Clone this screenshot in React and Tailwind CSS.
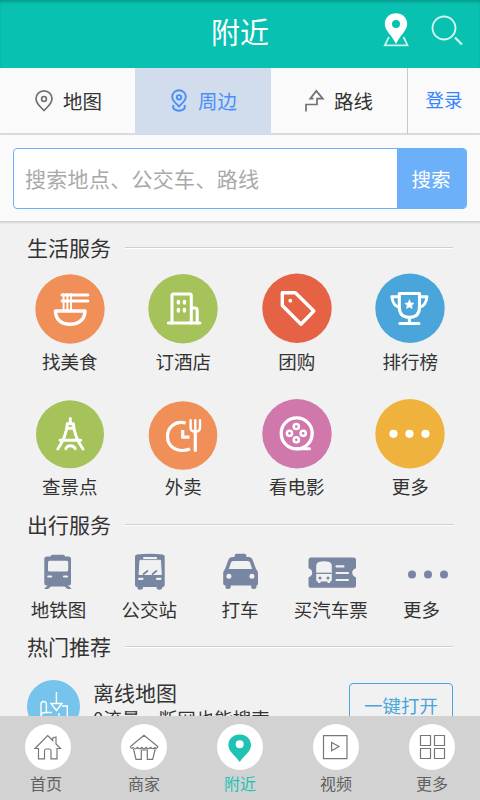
import React, { useState } from 'react';

const services = [
    {
        label: '找美食',
        circle: '#f08f57',
        cy: 35,
        icon: (
            <>
                <path d="M27 21H53M27 27H53" strokeWidth="2.8" />
                <path d="M28.6 20V36M32.4 20V36M36 20V36" strokeWidth="1.9" />
                <path d="M20.5 37H50C50 45 44 50.3 35 50.3S20.5 45 20.5 37Z" strokeWidth="3.5" />
            </>
        ),
    },
    {
        label: '订酒店',
        circle: '#a5c25b',
        cy: 34.7,
        icon: (
            <>
                <path d="M24 49V21.5Q24 20 25.5 20H42Q43.3 20 43.3 21.5V49M43.5 34H47Q49.2 34 49.2 36V49" strokeWidth="3" />
                <path d="M20.3 49H52" strokeWidth="3" />
                <path d="M30.4 27.6V29M36.4 27.6V29M30.4 35.6V37M36.4 35.6V37" strokeWidth="3.5" />
            </>
        ),
    },
    {
        label: '团购',
        circle: '#e56344',
        cy: 34.3,
        icon: (
            <>
                <path d="M20.3 18.8H33.3L51.8 37L39 50.2L20.3 31.5Z" strokeWidth="3.4" />
                <circle cx="28.3" cy="26.7" r="1.9" fill="white" stroke="none" />
            </>
        ),
    },
    {
        label: '排行榜',
        circle: '#49a5da',
        cy: 34.3,
        icon: (
            <>
                <path d="M24.3 19.5H44.5V33C44.5 40 40.5 43.3 34.4 43.3S24.3 40 24.3 33Z" strokeWidth="3.1" />
                <path d="M24 22.7H16.8C17.4 28.5 19.5 32.5 24.6 33.5M44.8 22.7H52C51.4 28.5 49.3 32.5 44.2 33.5" strokeWidth="2.9" />
                <path d="M34.4 44V49M24.8 49.6H44" strokeWidth="3" />
                <path d="M34.4 25.8L35.8 28.8L39 29.2L36.7 31.4L37.3 34.6L34.4 33.1L31.5 34.6L32.1 31.4L29.8 29.2L33 28.8Z" fill="white" strokeWidth="0.5" />
            </>
        ),
    },
    {
        label: '查景点',
        circle: '#a5c25b',
        cy: 35.3,
        r: 34,
        icon: (
            <>
                <path d="M35.3 19.5V24" strokeWidth="3" />
                <path d="M32.3 24.8H38.4C39 32 41.5 41 48 50M32.3 24.8C31.7 32 29 41 22.8 50M31.8 29.3H38.8M25 41.3H45.7" strokeWidth="2.9" />
                <path d="M30.8 49.7C32.5 45.8 38.3 45.8 40.2 49.7" strokeWidth="2.9" />
            </>
        ),
    },
    {
        label: '外卖',
        circle: '#f08f57',
        cy: 36.5,
        r: 34.3,
        icon: (
            <>
                <path d="M37.7 24C26.5 21.5 19.5 28.5 19.5 37.500C19.5 48 29.5 54.5 42 50" strokeWidth="3.2" strokeLinecap="butt" />
                <path d="M34.7 31V38.2H41.5" strokeWidth="3.2" strokeLinecap="butt" />
                <path d="M42.6 21.2V28.5Q42.6 32.7 47.3 32.7T52 28.5V21.2M47.3 21.2V32" strokeWidth="2.4" />
                <path d="M47.3 32V51.5" strokeWidth="3.2" />
            </>
        ),
    },
    {
        label: '看电影',
        circle: '#d077ac',
        cy: 34.7,
        icon: (
            <>
                <circle cx="34.7" cy="34.4" r="15.5" strokeWidth="3.3" />
                <path d="M34 49.7H47.5" strokeWidth="3" />
                <circle cx="34.3" cy="27.5" r="2.6" strokeWidth="2.5" />
                <circle cx="27.5" cy="34.3" r="2.6" strokeWidth="2.5" />
                <circle cx="41.2" cy="34.3" r="2.6" strokeWidth="2.5" />
                <circle cx="34.3" cy="40.8" r="2.6" strokeWidth="2.5" />
            </>
        ),
    },
    {
        label: '更多',
        circle: '#efb33d',
        cy: 34.7,
        icon: (
            <g fill="white" stroke="none">
                <circle cx="18.4" cy="34.8" r="4.1" />
                <circle cx="34.4" cy="34.8" r="4.1" />
                <circle cx="50.4" cy="34.8" r="4.1" />
            </g>
        ),
    },
];

const transport = [
    {
        label: '地铁图',
        icon: (
            <>
                <path d="M16.5 4.5Q16.5 2.8 18.5 2.8H29Q31 2.8 31 4.5H34.5Q37 4.5 37 7V31.5Q37 33.5 35 33.5H12.5Q10.3 33.5 10.3 31.5V7Q10.3 4.5 13 4.5Z" />
                <path d="M14 33L10 37H14L17 34.5H30.5L33.5 37H37.8L33.5 33Z" />
                <rect x="14" y="8.7" width="20.2" height="10.7" rx="1.5" fill="#f1f1f1" />
                <path d="M14.3 24.5H17.2M30 24.5H33" stroke="#f1f1f1" strokeWidth="2.2" strokeLinecap="round" />
            </>
        ),
    },
    {
        label: '公交站',
        icon: (
            <>
                <path d="M10 4.5Q10 3 12 2.6Q24.8 0.8 37.6 2.6Q39.7 3 39.7 4.5V33Q39.7 35 37.7 35H37.2V35.5Q37.2 37.7 34.4 37.7T31.6 35.5V35H18V35.5Q18 37.7 15.2 37.7T12.4 35.5V35H12Q10 35 10 33Z" />
                <path d="M15 8.3H35.5L36.3 22.5H14Z" fill="#f1f1f1" stroke="#f1f1f1" strokeLinejoin="round" />
                <path d="M19 5.9H31.2" stroke="#f1f1f1" strokeWidth="2" strokeLinecap="round" />
                <path d="M18 22.5L23 18.5M27 22.5L32 18.5" stroke="#7986a1" strokeWidth="1.7" />
                <path d="M14 26.8H17.5M32 26.8H35.5" stroke="#f1f1f1" strokeWidth="2.2" strokeLinecap="round" />
            </>
        ),
    },
    {
        label: '打车',
        icon: (
            <>
                <path d="M18.5 5Q18.5 1.7 20.5 1.7H28.5Q30.5 1.7 30.5 5H33Q35.5 5 36.5 7.5L40 17Q42 19 42 21V31.5Q42 33.5 40.5 33.5V35Q40.5 37 37.8 37T35.2 35V33.5H14.8V35Q14.8 37 12.1 37T9.5 35V33.5Q7.2 33.5 7.2 31.5V21Q7.2 19 9 17L12.5 7.5Q13.5 5 16 5Z" />
                <path d="M17 9H32Q33.5 9 34 10.5L36.2 17H12.8L15 10.5Q15.5 9 17 9Z" fill="#f1f1f1" />
                <circle cx="12.9" cy="24.2" r="2.5" fill="#f1f1f1" />
                <circle cx="35.9" cy="24.2" r="2.5" fill="#f1f1f1" />
            </>
        ),
    },
    {
        label: '买汽车票',
        icon: (
            <>
                <path d="M3.5 5.5H46.5Q49 5.5 49 8V16.2Q45.2 17.5 45.2 20.8T49 25.4V33.2Q49 35.7 46.5 35.7H3.5Q1.5 35.7 1.5 33.2V25.4Q5.2 24 5.2 20.8T1.5 16.2V8Q1.5 5.5 3.5 5.5Z" />
                <path d="M11.5 10Q17 8.6 22.5 10Q24.8 11 24.8 13.5V28Q24.8 29.5 23 29.5V31H20.5V29.5H13.5V31H11V29.5Q9.2 29.5 9.2 28V13.5Q9.2 11 11.5 10Z" fill="#f1f1f1" />
                <path d="M9.2 21.3H24.8" stroke="#7986a1" strokeWidth="1.3" />
                <circle cx="13" cy="26" r="1.5" />
                <circle cx="21" cy="26" r="1.5" />
                <path d="M29.5 14.4H36.5M29.5 21H41M29.5 28H41" stroke="#f1f1f1" strokeWidth="2.1" strokeLinecap="round" />
            </>
        ),
    },
    {
        label: '更多',
        icon: (
            <>
                <circle cx="14" cy="22.5" r="4" />
                <circle cx="30" cy="22.5" r="4" />
                <circle cx="46" cy="22.5" r="4" />
            </>
        ),
    },
];

const navItems = [
    {
        label: '首页',
        icon: <path d="M13.5 24.5H10L22.7 11.5L27.7 16.5V14L31 13V20L35.5 24.5H32V34.8H26V27Q26 25 24.5 25H21Q19.5 25 19.5 27V34.8H13.5Z" />,
    },
    {
        label: '商家',
        icon: (
            <path d="M23 11.2L9.5 22.5Q10 25.5 12.3 23.5Q14.2 26 16.5 23.5Q18.6 26 20.8 23.5Q23 26 25.2 23.5Q27.4 26 29.6 23.5Q31.8 26 34 23.5Q36.3 25.5 36.8 22.5ZM12.5 25L15 35.3H20.3V26H26.3V35.3H31.7L34.2 25" />
        ),
    },
    {
        label: '附近',
        icon: (
            <path fillRule="evenodd" stroke="none" fill="#1fc3b3" d="M22.700 10.500C16.200 10.500 11.400 15 11.400 21C11.400 27.500 17.700 31 22.700 38C27.700 31 34 27.500 34 21C34 15 29.200 10.500 22.700 10.500ZM22.700 16.200A4 4 0 1 1 22.700 24.200A4 4 0 1 1 22.700 16.200Z" />
        ),
    },
    {
        label: '视频',
        icon: <path d="M10.500 11.700H34V34.700H10.500ZM18.600 18.500V26.700L26 22.600Z" />,
    },
    {
        label: '更多',
        icon: <path d="M11.5 11.5H21.5V21.5H11.5ZM25.500 11.5H35.5V21.5H25.5ZM11.5 24.5H21.5V34.5H11.5ZM25.5 24.5H35.5V34.5H25.5Z" />,
    },
];

function SectionTitle({ title }) {
    return (
        <div className="ml-[27px] mr-[27px] flex h-7 items-center">
            <h2 className="w-[98px] whitespace-nowrap pb-[4px] text-[21px] leading-6 text-[#333]">{title}</h2>
            <div className="-mt-[2px] h-[2px] flex-1 border-t border-[#cfcfcf] bg-white" />
        </div>
    );
}

function Header() {
    return (
        <header className="grid h-[68px] shrink-0 grid-cols-3 bg-[#08c1b0] shadow-[inset_0_3px_3px_-1px_rgba(0,0,0,0.2)]">
            <h1 className="col-start-2 text-center text-[29px] leading-[62px] text-white">附近</h1>
            <div className="flex justify-end gap-[22px] pr-[17px] pt-[12px]">
                <svg className="h-[36px] w-[26px]" viewBox="0 0 26 36" fill="none">
                    <path d="M6 25L1.8 33.3H24.5L20.500 25" stroke="#c9f2ed" strokeWidth="1.8" />
                    <path fillRule="evenodd" fill="white" d="M13 1.3C6.5 1.3 1.8 6 1.8 12C1.8 18.500 8.5 22.5 13 32C17.5 22.5 24.2 18.5 24.2 12C24.2 6 19.5 1.3 13 1.3ZM13 8A4 4 0 1 1 13 16A4 4 0 1 1 13 8Z" />
                </svg>
                <svg className="h-[36px] w-[32px]" viewBox="0 0 32 36" fill="none" stroke="#d5f5f1">
                    <circle cx="13" cy="16" r="11.5" strokeWidth="1.8" />
                    <path d="M24 25.5L31 32.5" strokeWidth="2.2" />
                </svg>
            </div>
        </header>
    );
}

function Tabs({ tab, setTab }) {
    const tabClass = (name) =>
        tab === name ? 'bg-[#d1dced] text-[#4a8ff7] border-[#d1dced]' : 'bg-[#fafafa] text-[#333] border-[#dcdcdc]';

    return (
        <div className="flex h-[67px] shrink-0 text-[19.5px]">
            <button onClick={() => setTab('map')} className={`flex w-[135px] items-center border-b-2 pl-[34px] ${tabClass('map')}`}>
                <svg className="mr-[9px] h-[24px] w-[20px]" viewBox="0 0 20 24" fill="none" stroke={tab === 'map' ? '#4a8ff7' : '#707070'} strokeWidth="1.7">
                    <path d="M10 21.500C6 17.5 2 14.5 2 9.7A8 7.8 0 0 1 18 9.7C18 14.5 14 17.5 10 21.5Z" />
                    <circle cx="10" cy="9.9" r="2.4" />
                </svg>
                地图
            </button>
            <button onClick={() => setTab('nearby')} className={`flex w-[136px] items-center border-b-2 pl-[34px] ${tabClass('nearby')}`}>
                <svg className="mr-[9px] h-[24px] w-[20px]" viewBox="0 0 20 24" fill="none" stroke={tab === 'nearby' ? '#4a8ff7' : '#707070'} strokeWidth="1.9">
                    <path d="M10 17.5C7 14 3.2 12 3.2 7.7A6.8 6.5 0 0 1 16.8 7.7C16.8 12 13 14 10 17.5Z" />
                    <circle cx="10" cy="8.3" r="2.2" />
                    <path d="M4.5 16C3 20 6.500 21.7 10 21.7S17 20 15.5 16" />
                </svg>
                周边
            </button>
            <button onClick={() => setTab('route')} className={`flex w-[136px] items-center border-b-2 pl-[33px] ${tabClass('route')}`}>
                <svg className="mr-[9px] h-[24px] w-[21px]" viewBox="0 0 21 24" fill="none" stroke={tab === 'route' ? '#4a8ff7' : '#707070'} strokeWidth="1.7">
                    <path d="M2 22.5V15.5H13V9.7H18.8L12.3 1.9L6.2 9.7H9.5" />
                </svg>
                路线
            </button>
            <button className="flex-1 border-b-2 border-l border-b-[#dcdcdc] border-l-[#c8c8c8] bg-[#fafafa] pb-[2px] text-[18.5px] text-[#3385ff]">
                登录
            </button>
        </div>
    );
}

function SearchBar() {
    return (
        <div className="h-[87px] shrink-0 border-b border-[#cfcfcf] bg-[#fafafa] px-[13px] pt-[13px] shadow-[0_1px_2px_rgba(0,0,0,0.12)]">
            <div className="flex h-[61px] overflow-hidden rounded border border-[#6bb0f8] bg-white">
                <input
                    className="min-w-0 flex-1 pl-[11px] text-[21px] tracking-[0.3px] outline-none placeholder:text-[#a9a9a9]"
                    placeholder="搜索地点、公交车、路线"
                />
                <button className="w-[69px] bg-[#6bb0f8] pr-[1px] text-[19.5px] text-white">搜索</button>
            </div>
        </div>
    );
}

function App() {
    const [tab, setTab] = useState('nearby');

    return (
        <div className="mx-auto flex h-[800px] w-[480px] flex-col overflow-hidden bg-[#f1f1f1] font-['Noto_Sans_CJK_SC',sans-serif] text-[#333]">
            <Header />
            <Tabs tab={tab} setTab={setTab} />
            <SearchBar />

            <main className="min-h-0 flex-1 overflow-hidden pt-[13px]">
                <SectionTitle title="生活服务" />
                <div className="mx-auto mt-[11px] grid h-[238px] w-[454px] auto-rows-[125px] grid-cols-4">
                    {services.map((service, index) => (
                        <a key={index} className="flex flex-col items-center">
                            <svg className="size-[70px] overflow-visible" viewBox="0 0 70 70" fill="none" stroke="white" strokeLinecap="round" strokeLinejoin="round">
                                <circle cx="35" cy={service.cy} r={service.r || 34.7} fill={service.circle} stroke="none" />
                                {service.icon}
                            </svg>
                            <span className="mt-[5px] text-[18.5px] leading-6">{service.label}</span>
                        </a>
                    ))}
                </div>

                <SectionTitle title="出行服务" />
                <div className="mx-auto mt-[12px] grid h-[82px] w-[454px] grid-cols-5">
                    {transport.map((item, index) => (
                        <a key={index} className="flex flex-col items-center">
                            <svg className="h-[40px] w-[48px] overflow-visible" viewBox="0 0 48 40" fill="#7986a1">
                                {item.icon}
                            </svg>
                            <span className="mt-[5px] whitespace-nowrap text-[18.5px] leading-6">{item.label}</span>
                        </a>
                    ))}
                </div>

                <SectionTitle title="热门推荐" />
                <div className="flex px-[27px] pt-[18px]">
                    <svg className="size-[53px]" viewBox="0 0 53 53" fill="none" stroke="white" strokeWidth="1.4">
                        <circle cx="26.5" cy="26.5" r="26.5" fill="#76c3ec" stroke="none" />
                        <path d="M29.4 12V23.5H24L29.4 30.5L35 23.5H29.4M14 40V24.5Q14 21.5 16.7 21.5T19.4 24.5V32.5Q14 32 14 36M19.4 32.5H25M35 26H40.3V40M32 33V40" />
                    </svg>
                    <div className="-mt-[1px] ml-[13px] flex-1 whitespace-nowrap">
                        <h3 className="text-[21px] leading-[26px]">离线地图</h3>
                        <p className="text-[18.5px] leading-[26px]">0流量，断网也能搜索</p>
                    </div>
                    <button className="mt-[3px] h-[46px] w-[104px] rounded border-[1.5px] border-[#49a5da] text-[18.5px] text-[#49a5da]">一键打开</button>
                </div>
            </main>

            <nav className="grid h-[84px] shrink-0 grid-cols-5 bg-[#d2d2d2] pt-[8px]">
                {navItems.map((item, index) => (
                    <a key={index} className="flex flex-col items-center">
                        <svg className="size-[46px] rounded-full bg-white" viewBox="0 0 46 46" fill="none" stroke="#777" strokeWidth="1.2">
                            {item.icon}
                        </svg>
                        <span className={`mt-[3px] text-[16px] leading-5 ${index === 0 ? 'pr-[4px]' : ''} ${item.label === '附近' ? 'text-[#1fc3b3]' : 'text-[#606060]'}`}>{item.label}</span>
                    </a>
                ))}
            </nav>
        </div>
    );
}

export default App;
